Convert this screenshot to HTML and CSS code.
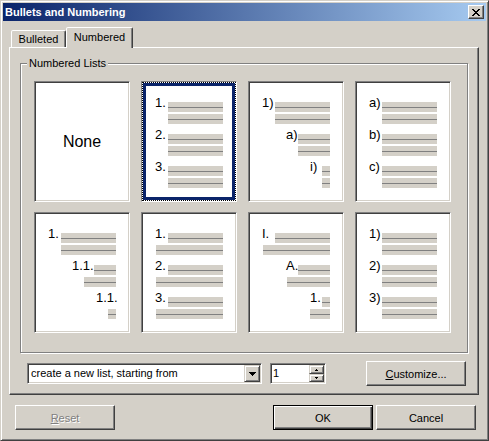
FILE: index.html
```html
<!DOCTYPE html>
<html>
<head>
<meta charset="utf-8">
<title>Bullets and Numbering</title>
<link rel="stylesheet" href="styles.css">
</head>
<body>
<div class="window">
  <div class="titlebar">
    <span class="title">Bullets and Numbering</span>
    <div class="close">
      <svg width="8" height="7" viewBox="0 0 8 7" shape-rendering="crispEdges"><path d="M0 0h2v1H0zM6 0h2v1H6zM1 1h2v1H1zM5 1h2v1H5zM2 2h4v1H2zM3 3h2v1H3zM2 4h4v1H2zM1 5h2v1H1zM5 5h2v1H5zM0 6h2v1H0zM6 6h2v1H6z" fill="#000"/></svg>
    </div>
  </div>
  <div class="body">
    <div class="tabs">
      <div class="tab off">Bulleted</div>
      <div class="tab on">Numbered</div>
    </div>
    <div class="panel">
      <div class="group">
        <div class="glabel">Numbered Lists</div>
        <div class="grid">
          <div class="cell none"><span>None</span></div>

          <div class="cell sel"><div class="focus"><div class="hl">
            <div class="grp"><div class="ln n1"><span class="lab">1.</span><i class="bar"></i></div><div class="ln h1"><i class="bar"></i></div></div>
            <div class="grp"><div class="ln n1"><span class="lab">2.</span><i class="bar"></i></div><div class="ln h1"><i class="bar"></i></div></div>
            <div class="grp"><div class="ln n1"><span class="lab">3.</span><i class="bar"></i></div><div class="ln h1"><i class="bar"></i></div></div>
          </div></div></div>

          <div class="cell">
            <div class="grp"><div class="ln n1"><span class="lab">1)</span><i class="bar"></i></div><div class="ln h1"><i class="bar"></i></div></div>
            <div class="grp"><div class="ln n2"><span class="lab">a)</span><i class="bar"></i></div><div class="ln h2"><i class="bar"></i></div></div>
            <div class="grp"><div class="ln n3"><span class="lab">i)</span><i class="bar"></i></div><div class="ln h3"><i class="bar"></i></div></div>
          </div>

          <div class="cell">
            <div class="grp"><div class="ln n1"><span class="lab">a)</span><i class="bar"></i></div><div class="ln h1"><i class="bar"></i></div></div>
            <div class="grp"><div class="ln n1"><span class="lab">b)</span><i class="bar"></i></div><div class="ln h1"><i class="bar"></i></div></div>
            <div class="grp"><div class="ln n1"><span class="lab">c)</span><i class="bar"></i></div><div class="ln h1"><i class="bar"></i></div></div>
          </div>

          <div class="cell">
            <div class="grp"><div class="ln n1"><span class="lab">1.</span><i class="bar"></i></div><div class="ln h1"><i class="bar"></i></div></div>
            <div class="grp"><div class="ln n2"><span class="lab">1.1.</span><i class="bar"></i></div><div class="ln h2"><i class="bar"></i></div></div>
            <div class="grp"><div class="ln n3"><span class="lab">1.1.</span></div><div class="ln h3"><i class="bar"></i></div></div>
          </div>

          <div class="cell">
            <div class="grp"><div class="ln n1"><span class="lab">1.</span><i class="bar"></i></div><div class="ln f1"><i class="bar"></i></div></div>
            <div class="grp"><div class="ln n1"><span class="lab">2.</span><i class="bar"></i></div><div class="ln f1"><i class="bar"></i></div></div>
            <div class="grp"><div class="ln n1"><span class="lab">3.</span><i class="bar"></i></div><div class="ln f1"><i class="bar"></i></div></div>
          </div>

          <div class="cell">
            <div class="grp"><div class="ln n1"><span class="lab">I.</span><i class="bar"></i></div><div class="ln f1"><i class="bar"></i></div></div>
            <div class="grp"><div class="ln n2"><span class="lab">A.</span><i class="bar"></i></div><div class="ln f2"><i class="bar"></i></div></div>
            <div class="grp"><div class="ln n3"><span class="lab">1.</span><i class="bar"></i></div><div class="ln f3"><i class="bar"></i></div></div>
          </div>

          <div class="cell">
            <div class="grp"><div class="ln n1"><span class="lab">1)</span><i class="bar"></i></div><div class="ln h1"><i class="bar"></i></div></div>
            <div class="grp"><div class="ln n1"><span class="lab">2)</span><i class="bar"></i></div><div class="ln h1"><i class="bar"></i></div></div>
            <div class="grp"><div class="ln n1"><span class="lab">3)</span><i class="bar"></i></div><div class="ln h1"><i class="bar"></i></div></div>
          </div>
        </div>
      </div>
      <div class="controls">
        <div class="combo">
          <span class="ctext">create a new list, starting from</span>
          <div class="dropbtn">
            <svg width="7" height="4" viewBox="0 0 7 4" shape-rendering="crispEdges"><path d="M0 0h7v1H0zM1 1h5v1H1zM2 2h3v1H2zM3 3h1v1H3z" fill="#000"/></svg>
          </div>
        </div>
        <div class="spin">
          <span class="stext">1</span>
          <div class="spinbtns">
            <div class="sbtn up"><svg width="3" height="2" viewBox="0 0 3 2" shape-rendering="crispEdges"><path d="M1 0h1v1H1zM0 1h3v1H0z" fill="#000"/></svg></div>
            <div class="sbtn down"><svg width="3" height="2" viewBox="0 0 3 2" shape-rendering="crispEdges"><path d="M0 0h3v1H0zM1 1h1v1H1z" fill="#000"/></svg></div>
          </div>
        </div>
        <div class="btn customize"><span><u>C</u>ustomize...</span></div>
      </div>
    </div>
    <div class="footer">
      <div class="btn dis"><span><u>R</u>eset</span></div>
      <div class="spacer"></div>
      <div class="btn def"><span>OK</span></div>
      <div class="btn"><span>Cancel</span></div>
    </div>
  </div>
</div>
</body>
</html>
```
FILE: styles.css
```css
* { box-sizing: border-box; }
html, body { margin: 0; padding: 0; }
body {
  background: #d4d0c8;
  font-family: "Liberation Sans", Arial, sans-serif;
  font-size: 11px;
  color: #000;
}
.window {
  width: 489px;
  height: 441px;
  background: #d4d0c8;
  border: 1px solid;
  border-color: #d4d0c8 #404040 #404040 #d4d0c8;
  box-shadow: inset 1px 1px #fff, inset -1px -1px #808080;
  padding: 2px;
  display: flex;
  flex-direction: column;
}
.titlebar {
  height: 18px;
  flex: none;
  background: linear-gradient(to right, #0a246a, #a6caf0);
  display: flex;
  align-items: center;
  justify-content: space-between;
  padding: 0 2px;
}
.title {
  color: #fff;
  font-weight: bold;
  font-size: 11px;
  line-height: 13px;
  padding-top: 1px;
  white-space: nowrap;
}
.close {
  width: 16px;
  height: 14px;
  background: #d4d0c8;
  border: 1px solid;
  border-color: #fff #404040 #404040 #fff;
  box-shadow: inset -1px -1px #808080;
  display: flex;
  align-items: center;
  justify-content: center;
  padding-right: 1px;
}
.close svg { display: block; }
.body {
  flex: 1;
  padding: 6px 7px 0 6px;
  display: flex;
  flex-direction: column;
}
.tabs {
  display: flex;
  align-items: flex-end;
  height: 21px;
  margin-bottom: -1px;
  padding-left: 2px;
}
.tab {
  background: #d4d0c8;
  border: 1px solid;
  border-bottom: none;
  border-color: #fff #404040 transparent #fff;
  box-shadow: inset -1px 0 #808080;
  border-radius: 2px 2px 0 0;
  text-align: center;
  line-height: 13px;
  white-space: nowrap;
}
.tab.off {
  width: 55px;
  height: 17px;
  padding-top: 2px;
  margin-bottom: 1px;
}
.tab.on {
  width: 67px;
  height: 21px;
  padding-top: 3px;
  position: relative;
  z-index: 1;
}
.panel {
  height: 348px;
  flex: none;
  border: 1px solid;
  border-color: #fff #404040 #404040 #fff;
  box-shadow: inset -1px -1px #808080;
  padding: 15px 0 0 10px;
}
.group {
  width: 448px;
  border: 1px solid #808080;
  box-shadow: inset 1px 1px #fff, 1px 1px #fff;
  padding: 0 0 19px 13px;
}
.glabel {
  display: table;
  margin: -7px 0 11px -7px;
  padding: 0 2px;
  background: #d4d0c8;
  line-height: 13px;
  white-space: nowrap;
}
.grid {
  display: grid;
  grid-template-columns: repeat(4, 96px);
  grid-template-rows: repeat(2, 121px);
  gap: 10px 11px;
}
.cell {
  background: #fff;
  border: 1px solid;
  border-color: #808080 #fff #fff #808080;
  box-shadow: inset 1px 1px #404040, inset -1px -1px #d4d0c8;
  padding: 20px 13px 0 4px;
}
.cell.none {
  display: flex;
  align-items: center;
  justify-content: center;
  padding: 0;
  font-size: 16px;
}
.cell.sel {
  box-shadow: none;
  padding: 0;
}
.focus {
  height: 100%;
  border: 1px dotted #000;
}
.hl {
  height: 100%;
  border: 3px solid #0a246a;
  padding: 16px 9px 0 0;
}
.grp {
  display: flex;
  flex-direction: column;
  gap: 2px;
  margin-bottom: 10px;
}
.ln {
  display: flex;
  height: 10px;
}
.lab {
  font-size: 13px;
  line-height: 10px;
  margin-top: -4px;
  white-space: nowrap;
  flex: none;
}
.bar {
  display: block;
  flex: 1;
  height: 10px;
  background: linear-gradient(#d4d0c8 0 5px, #808080 5px 6px, #d4d0c8 6px);
}
.n1 { padding-left: 9px; }
.n1 .lab { min-width: 13px; }
.n2 { padding-left: 33px; }
.n2 .lab { min-width: 12px; }
.n3 { padding-left: 57px; }
.n3 .lab { min-width: 12px; }
.h1 { padding-left: 22px; }
.h2 { padding-left: 45px; }
.h3 { padding-left: 69px; }
.f1 { padding-left: 10px; }
.f2 { padding-left: 34px; }
.f3 { padding-left: 57px; }

.controls {
  display: flex;
  align-items: center;
  height: 25px;
  margin-top: 8px;
  padding-left: 7px;
}
.combo, .spin {
  height: 21px;
  background: #fff;
  border: 1px solid;
  border-color: #808080 #fff #fff #808080;
  box-shadow: inset 1px 1px #404040, inset -1px -1px #d4d0c8;
  padding: 1px;
  display: flex;
  align-items: stretch;
}
.combo { width: 235px; }
.ctext, .stext {
  flex: 1;
  line-height: 17px;
  padding-left: 2px;
  white-space: nowrap;
}
.stext { padding-left: 1px; }
.dropbtn, .sbtn {
  background: #d4d0c8;
  border: 1px solid;
  border-color: #d4d0c8 #404040 #404040 #d4d0c8;
  box-shadow: inset 1px 1px #fff, inset -1px -1px #808080;
  display: flex;
  align-items: center;
  justify-content: center;
}
.dropbtn { width: 16px; }
.dropbtn svg, .sbtn svg { display: block; }
.spin { width: 56px; margin-left: 8px; }
.spinbtns {
  width: 15px;
  display: flex;
  flex-direction: column;
}
.sbtn.up { height: 9px; }
.sbtn.down { height: 8px; }
.btn {
  width: 100px;
  height: 25px;
  flex: none;
  background: #d4d0c8;
  border: 1px solid;
  border-color: #fff #404040 #404040 #fff;
  box-shadow: inset -1px -1px #808080;
  display: flex;
  align-items: center;
  justify-content: center;
  white-space: nowrap;
}
.btn.customize { margin-left: 40px; }
.btn.def {
  border-color: #000;
  box-shadow: inset 1px 1px #fff, inset -1px -1px #404040, inset -2px -2px #808080;
}
.btn.dis {
  color: #808080;
  text-shadow: 1px 1px #fff;
}
.footer {
  display: flex;
  gap: 3px;
  margin-top: 10px;
  padding: 0 3px 0 6px;
}
.spacer { flex: 1; }
```
